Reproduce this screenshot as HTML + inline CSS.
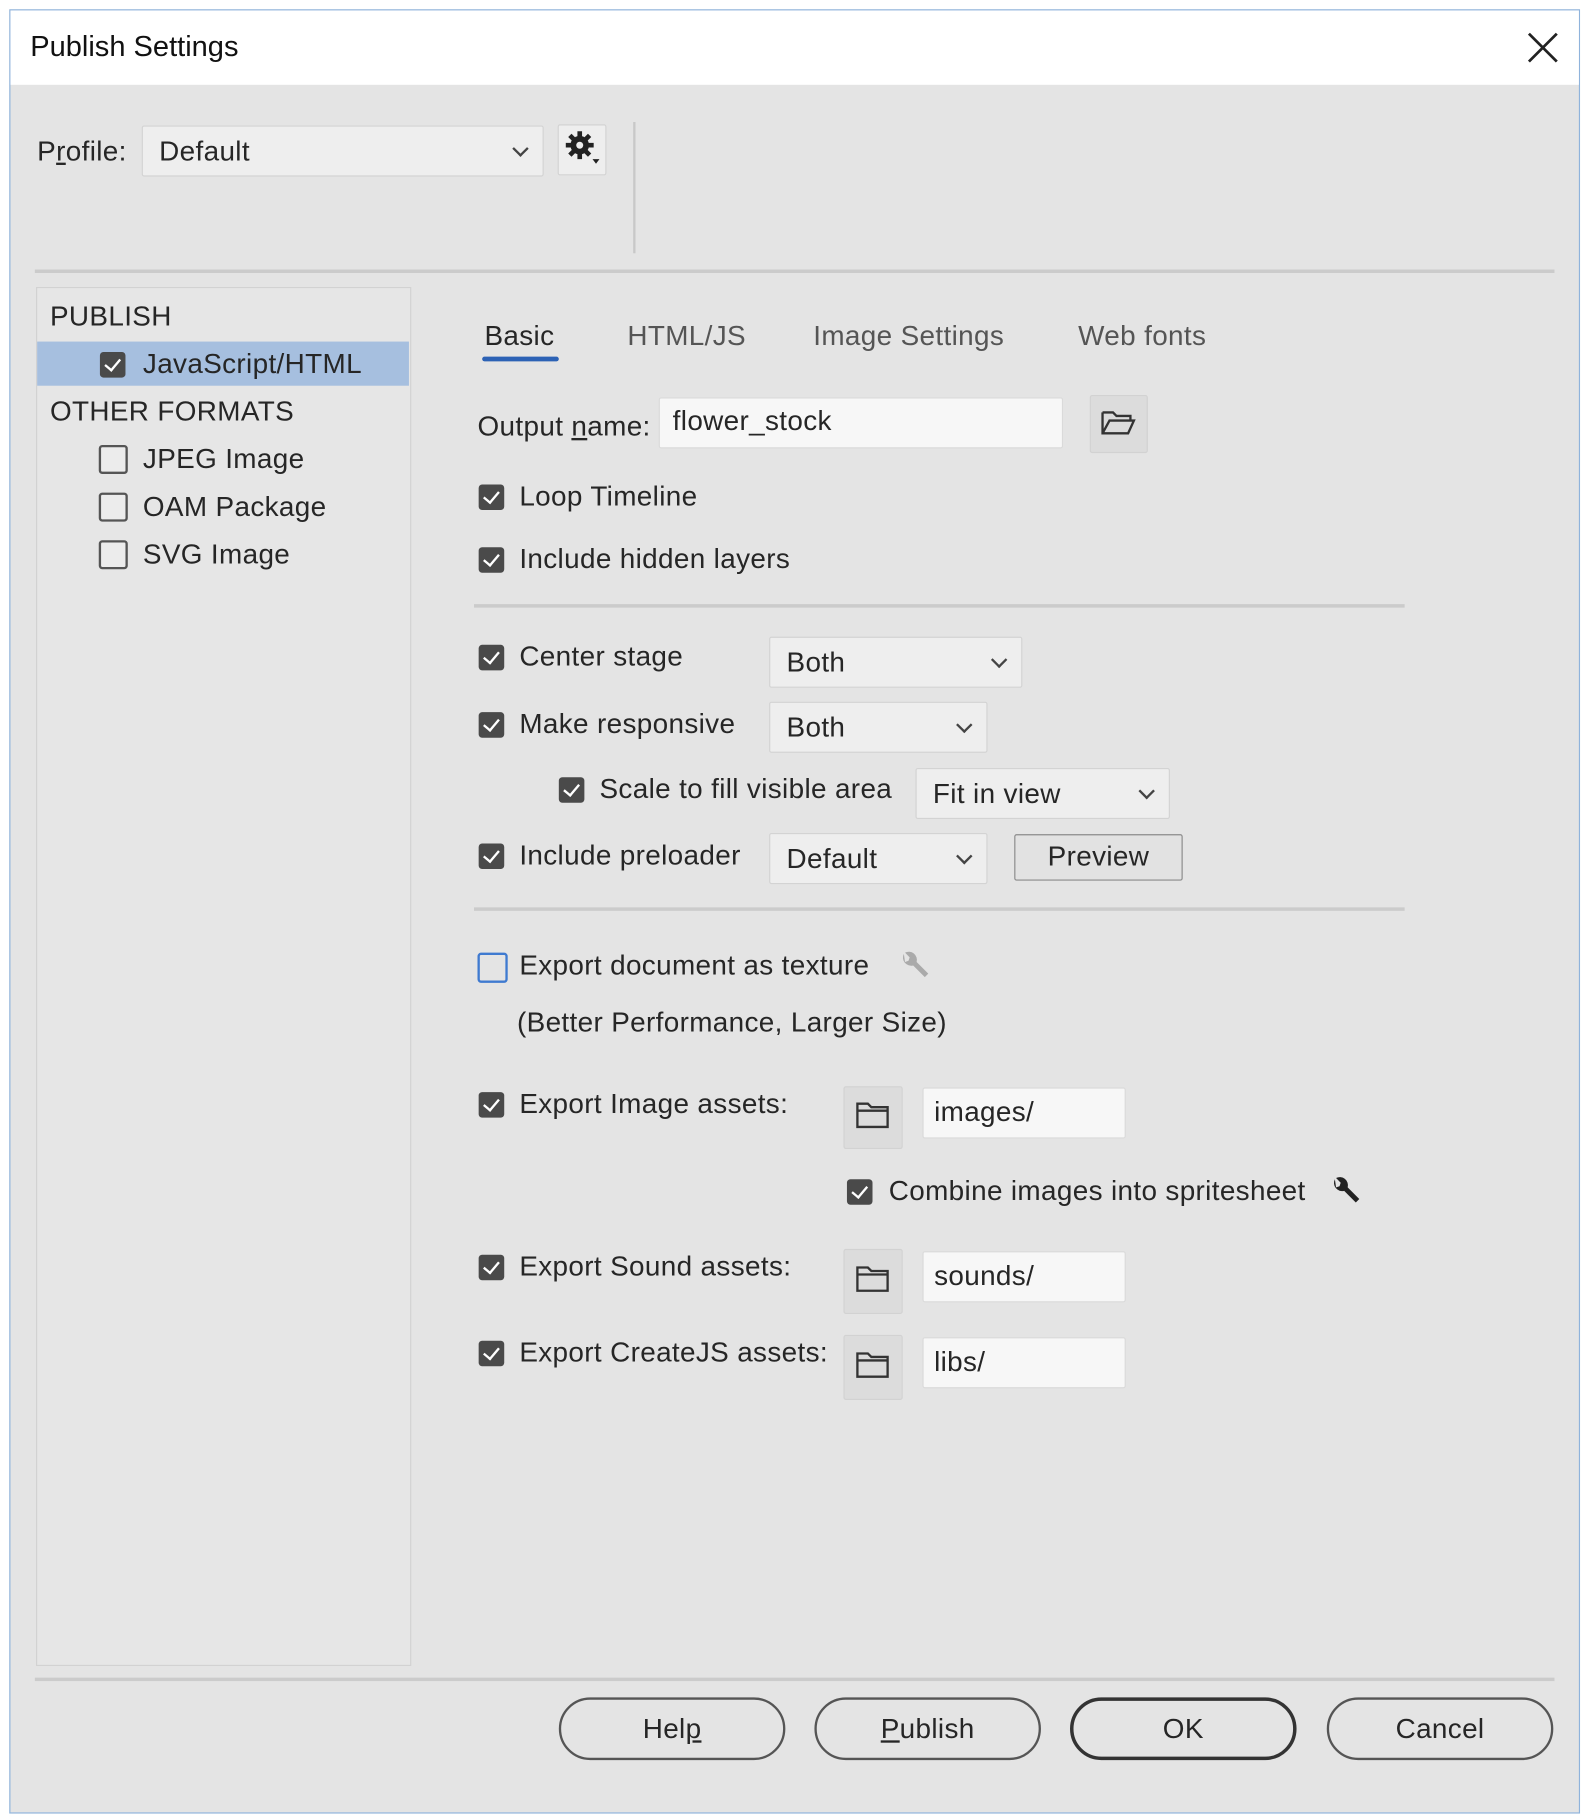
<!DOCTYPE html>
<html><head><meta charset="utf-8"><style>
html,body{margin:0;padding:0;width:1587px;height:1818px;overflow:hidden;background:#fff}
#s{position:absolute;left:0;top:0;width:1366px;height:1565px;transform:scale(1.16179);transform-origin:0 0;font-family:"Liberation Sans",sans-serif;color:#262626;font-size:24px;letter-spacing:0.3px}
.a{position:absolute}
.t{position:absolute;white-space:nowrap;line-height:1}
.cb{position:absolute;width:22px;height:22px;border-radius:3px;background:#4a4a4a}
.cb::after{content:"";position:absolute;left:7px;top:3px;width:6px;height:11px;border:solid #fff;border-width:0 2.5px 2.5px 0;transform:rotate(40deg)}
.ub{position:absolute;width:21px;height:21px;border:2px solid #555;border-radius:3px;background:#ececec}
.dd{position:absolute;background:#eeeeee;border:1px solid #d3d3d3;border-radius:2px}
.dd span{position:absolute;left:14px;top:8px}
.dd i{position:absolute;right:14px;top:14px;width:8px;height:8px;border:solid #444;border-width:0 2px 2px 0;transform:rotate(45deg)}
.inp{position:absolute;background:#f7f7f7;border:1px solid #dadada;border-radius:2px}
.fb{position:absolute;background:#dcdcdc;border:1px solid #d2d2d2;border-radius:2px}
.sep{position:absolute;height:3px;background:#cbcbcb}
.btn{position:absolute;top:1461px;width:195px;height:54px;border:2px solid #555;border-radius:28px;text-align:center;line-height:52px;box-sizing:border-box}
</style></head><body><div id="s">
<div class="a" style="left:8px;top:8px;width:1350px;height:1551px;border:1px solid #8fb3dc;background:#e4e4e4"></div>
<div class="a" style="left:9px;top:9px;width:1350px;height:64px;background:#fff"></div>
<div class="t" style="left:26px;top:28px;font-size:25px;color:#111;letter-spacing:0">Publish Settings</div>
<svg class="a" style="left:1314px;top:27px" width="28" height="28"><path d="M2 2L26 26M26 2L2 26" stroke="#222" stroke-width="2.4"/></svg>

<div class="t" style="left:32px;top:119px">P<u>r</u>ofile:</div>
<div class="dd" style="left:122px;top:108px;width:344px;height:42px"><span>Default</span><i></i></div>
<div class="dd" style="left:480px;top:107px;width:40px;height:42px"></div>
<svg class="a" style="left:484px;top:110px" width="36" height="34"><circle cx="15" cy="15" r="8" fill="#222"/><g stroke="#222" stroke-width="4"><path d="M15 3V27M3 15H27M6.5 6.5L23.5 23.5M23.5 6.5L6.5 23.5"/></g><circle cx="15" cy="15" r="3" fill="#eee"/><path d="M26 27L32 27L29 31Z" fill="#222"/></svg>
<div class="a" style="left:545px;top:105px;width:2px;height:113px;background:#c8c8c8"></div>
<div class="sep" style="left:30px;top:232px;width:1308px"></div>

<div class="a" style="left:31px;top:247px;width:321px;height:1185px;border:1px solid #d2d2d2;background:#e6e6e6"></div>
<div class="a" style="left:32px;top:294px;width:320px;height:38px;background:#a6bfdf"></div>
<div class="t" style="left:43px;top:261px">PUBLISH</div>
<div class="cb" style="left:86px;top:303px"></div><div class="t" style="left:123px;top:302px">JavaScript/HTML</div>
<div class="t" style="left:43px;top:343px">OTHER FORMATS</div>
<div class="ub" style="left:85px;top:383px"></div><div class="t" style="left:123px;top:384px">JPEG Image</div>
<div class="ub" style="left:85px;top:424px"></div><div class="t" style="left:123px;top:425px">OAM Package</div>
<div class="ub" style="left:85px;top:465px"></div><div class="t" style="left:123px;top:466px">SVG Image</div>

<div class="t" style="left:417px;top:278px">Basic</div>
<div class="a" style="left:415px;top:307px;width:66px;height:4px;background:#2c62b5;border-radius:2px"></div>
<div class="t" style="left:540px;top:278px;color:#555">HTML/JS</div>
<div class="t" style="left:700px;top:278px;color:#555">Image Settings</div>
<div class="t" style="left:928px;top:278px;color:#555">Web fonts</div>

<div class="t" style="left:411px;top:356px">Output <u>n</u>ame:</div>
<div class="inp" style="left:567px;top:342px;width:346px;height:42px"><span class="t" style="left:11px;top:8px">flower_stock</span></div>
<div class="fb" style="left:938px;top:340px;width:48px;height:48px"></div>
<svg class="a" style="left:947px;top:351px" width="32" height="26"><path d="M2 4h9l3 3h12v4M2 4v18h22l5-11H8L2 22" fill="none" stroke="#333" stroke-width="2"/></svg>

<div class="cb" style="left:412px;top:417px"></div><div class="t" style="left:447px;top:416px">Loop Timeline</div>
<div class="cb" style="left:412px;top:471px"></div><div class="t" style="left:447px;top:470px">Include hidden layers</div>
<div class="sep" style="left:408px;top:520px;width:801px"></div>

<div class="cb" style="left:412px;top:555px"></div><div class="t" style="left:447px;top:554px">Center stage</div>
<div class="dd" style="left:662px;top:548px;width:216px;height:42px"><span>Both</span><i></i></div>
<div class="cb" style="left:412px;top:613px"></div><div class="t" style="left:447px;top:612px">Make responsive</div>
<div class="dd" style="left:662px;top:604px;width:186px;height:42px"><span>Both</span><i></i></div>
<div class="cb" style="left:481px;top:669px"></div><div class="t" style="left:516px;top:668px">Scale to fill visible area</div>
<div class="dd" style="left:788px;top:661px;width:217px;height:42px"><span>Fit in view</span><i></i></div>
<div class="cb" style="left:412px;top:726px"></div><div class="t" style="left:447px;top:725px">Include preloader</div>
<div class="dd" style="left:662px;top:717px;width:186px;height:42px"><span>Default</span><i></i></div>
<div class="a" style="left:873px;top:718px;width:143px;height:38px;border:1px solid #8a8a8a;border-radius:2px;background:#e2e2e2;text-align:center;line-height:38px">Preview</div>
<div class="sep" style="left:408px;top:781px;width:801px"></div>

<div class="a" style="left:411px;top:820px;width:22px;height:22px;border:2px solid #3f7ad0;border-radius:3px"></div>
<div class="t" style="left:447px;top:820px">Export document as texture</div>
<svg class="a" style="left:772px;top:817px" width="30" height="30"><path d="M6 4a7 7 0 0 0 8 10l10 10 3-3-10-10a7 7 0 0 0-10-8l4 4-1 3-3 1z" fill="#aaa"/></svg>
<div class="t" style="left:445px;top:869px">(Better Performance, Larger Size)</div>

<div class="cb" style="left:412px;top:940px"></div><div class="t" style="left:447px;top:939px">Export Image assets:</div>
<div class="fb" style="left:726px;top:935px;width:49px;height:52px"></div>
<div class="inp" style="left:794px;top:936px;width:173px;height:42px"><span class="t" style="left:9px;top:9px">images/</span></div>
<div class="cb" style="left:729px;top:1015px"></div><div class="t" style="left:765px;top:1014px">Combine images into spritesheet</div>
<svg class="a" style="left:1143px;top:1011px" width="32" height="32"><path d="M6 4a7 7 0 0 0 8 10l10 10 3-3-10-10a7 7 0 0 0-10-8l4 4-1 3-3 1z" fill="#222"/></svg>

<div class="cb" style="left:412px;top:1080px"></div><div class="t" style="left:447px;top:1079px">Export Sound assets:</div>
<div class="fb" style="left:726px;top:1075px;width:49px;height:54px"></div>
<div class="inp" style="left:794px;top:1077px;width:173px;height:42px"><span class="t" style="left:9px;top:9px">sounds/</span></div>
<div class="cb" style="left:412px;top:1154px"></div><div class="t" style="left:447px;top:1153px">Export CreateJS assets:</div>
<div class="fb" style="left:726px;top:1149px;width:49px;height:54px"></div>
<div class="inp" style="left:794px;top:1151px;width:173px;height:42px"><span class="t" style="left:9px;top:9px">libs/</span></div>
<svg class="a" style="left:736px;top:947px" width="30" height="26"><path d="M2 3h9l3 3h14v17H2z" fill="none" stroke="#333" stroke-width="2"/><path d="M2 9h26" stroke="#333" stroke-width="2"/></svg>
<svg class="a" style="left:736px;top:1088px" width="30" height="26"><path d="M2 3h9l3 3h14v17H2z" fill="none" stroke="#333" stroke-width="2"/><path d="M2 9h26" stroke="#333" stroke-width="2"/></svg>
<svg class="a" style="left:736px;top:1162px" width="30" height="26"><path d="M2 3h9l3 3h14v17H2z" fill="none" stroke="#333" stroke-width="2"/><path d="M2 9h26" stroke="#333" stroke-width="2"/></svg>

<div class="sep" style="left:30px;top:1444px;width:1308px"></div>
<div class="btn" style="left:481px">Hel<u>p</u></div>
<div class="btn" style="left:701px"><u>P</u>ublish</div>
<div class="btn" style="left:921px;border-width:3px;border-color:#333;line-height:50px">OK</div>
<div class="btn" style="left:1142px">Cancel</div>
</div></body></html>
